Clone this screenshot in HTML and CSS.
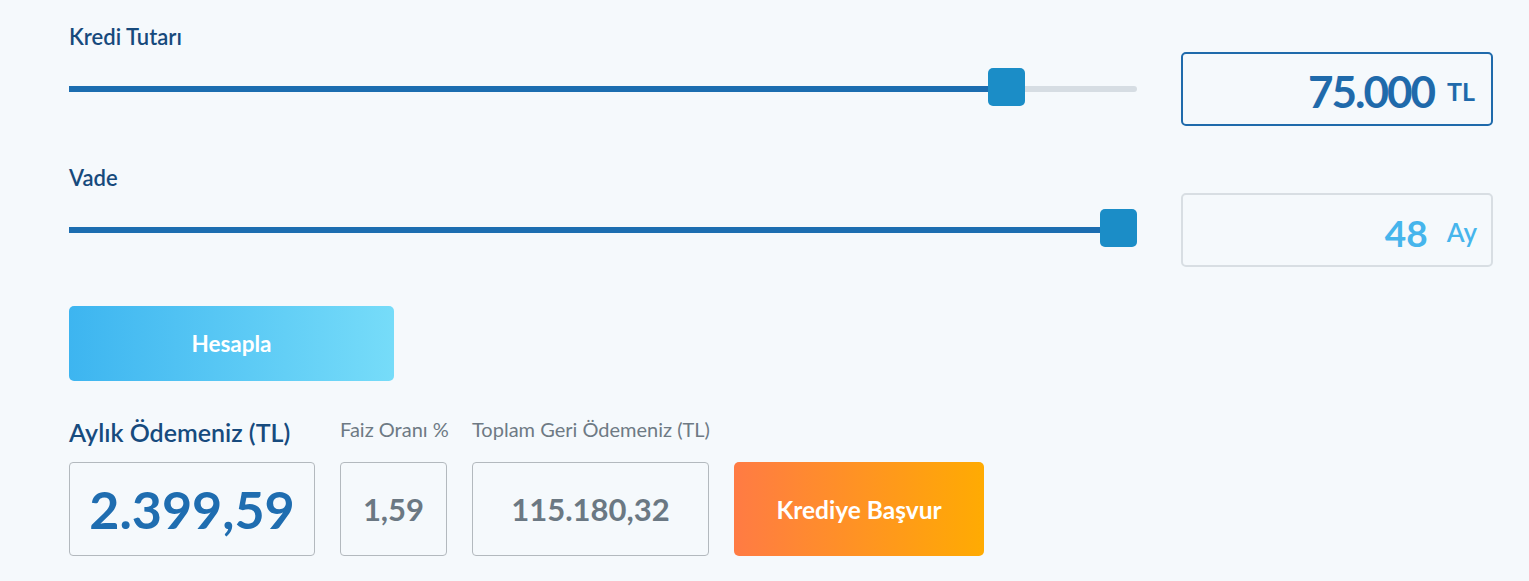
FILE: index.html
```html
<!DOCTYPE html>
<html lang="tr">
<head>
  <meta charset="UTF-8" />
  <meta name="viewport" content="width=device-width, initial-scale=1.0" />
  <title>Kredi Hesaplama</title>
  <link rel="stylesheet" href="styles.css">
</head>
<body>
  <div class="calculator">
    <div class="field">
      <label class="field-label">Kredi Tutarı</label>
      <div class="field-row">
        <div class="slider" style="--p: 0.891">
          <div class="slider-track"><div class="slider-fill"></div></div>
          <div class="slider-thumb"></div>
        </div>
        <div class="value-box active">
          <span class="value-number">75.000</span>
          <span class="value-unit">TL</span>
        </div>
      </div>
    </div>

    <div class="field">
      <label class="field-label">Vade</label>
      <div class="field-row">
        <div class="slider" style="--p: 1">
          <div class="slider-track"><div class="slider-fill"></div></div>
          <div class="slider-thumb"></div>
        </div>
        <div class="value-box">
          <span class="value-number">48</span>
          <span class="value-unit">Ay</span>
        </div>
      </div>
    </div>

    <button class="btn btn-calc">Hesapla</button>

    <div class="results">
      <div class="result monthly">
        <div class="result-label main">Aylık Ödemeniz (TL)</div>
        <div class="result-box">2.399,59</div>
      </div>
      <div class="result rate">
        <div class="result-label">Faiz Oranı %</div>
        <div class="result-box">1,59</div>
      </div>
      <div class="result total">
        <div class="result-label">Toplam Geri Ödemeniz (TL)</div>
        <div class="result-box">115.180,32</div>
      </div>
      <button class="btn btn-apply">Krediye Başvur</button>
    </div>
  </div>
</body>
</html>
```

FILE: styles.css
```css
body {
  margin: 0;
  background: #f5f9fc;
  font-family: Lato, "Noto Sans", sans-serif;
  color: #174a7c;
}
.calculator {
  padding: 24px 36px 0 69px;
}
.field {
  margin-bottom: 39px;
}
.field-label {
  display: block;
  font-size: 22px;
  line-height: 26px;
  font-weight: 600;
  color: #174a7c;
  margin-bottom: 2px;
}
.field-row {
  display: flex;
  align-items: center;
  gap: 44px;
}

/* slider */
.slider {
  position: relative;
  flex: 1;
  height: 38px;
  margin-bottom: 4px;
  display: flex;
  align-items: center;
}
.slider-track {
  width: 100%;
  height: 6px;
  margin-top: 4px;
  background: #d6dde3;
  border-radius: 0 3px 3px 0;
  overflow: hidden;
}
.slider-fill {
  height: 100%;
  width: calc((100% - 37px) * var(--p) + 18px);
  background: #1c6db0;
}
.slider-thumb {
  position: absolute;
  top: 0;
  left: calc((100% - 37px) * var(--p));
  width: 37px;
  height: 38px;
  border-radius: 5px;
  background: #1b8dc7;
}

/* value input */
.value-box {
  box-sizing: border-box;
  width: 312px;
  height: 74px;
  padding: 4px 14px 0 16px;
  border: 2px solid #d8dee3;
  border-radius: 5px;
  display: flex;
  align-items: center;
  justify-content: flex-end;
  color: #46b5ec;
}
.value-box.active {
  border-color: #1f6aab;
  color: #1f6aab;
  padding-right: 16px;
}
.value-number {
  font-size: 37px;
  line-height: 1;
  font-weight: 700;
}
.value-unit {
  font-size: 26px;
  line-height: 1;
  font-weight: 600;
  margin-left: 19px;
}
.active .value-number {
  font-size: 44px;
  letter-spacing: -2px;
}
.active .value-unit {
  font-size: 25px;
  font-weight: 700;
  margin-left: 13px;
}

/* buttons */
.btn {
  border: none;
  border-radius: 5px;
  color: #fff;
  font-family: inherit;
  font-weight: 700;
  cursor: pointer;
}
.btn-calc {
  display: block;
  width: 325px;
  height: 75px;
  font-size: 22.5px;
  background: linear-gradient(90deg, #3db5f0, #76dcf9);
}
.btn-apply {
  width: 250px;
  height: 94px;
  font-size: 24.5px;
  background: linear-gradient(90deg, #ff7b44, #ffab02);
}

/* results */
.results {
  display: flex;
  align-items: flex-end;
  gap: 25px;
  margin-top: 36px;
}
.result {
  display: flex;
  flex-direction: column;
  flex: none;
}
.result.monthly { width: 246px; }
.result.rate { width: 107px; }
.result.total { width: 237px; }
.result-label {
  font-size: 20px;
  line-height: 24px;
  color: #6e7a84;
  white-space: nowrap;
  margin-bottom: 21px;
}
.result-label.main {
  font-size: 25px;
  line-height: 28px;
  font-weight: 600;
  color: #174b7e;
  margin-bottom: 16px;
}
.result-box {
  box-sizing: border-box;
  height: 94px;
  border: 1px solid #b3b9be;
  border-radius: 4px;
  display: flex;
  align-items: center;
  justify-content: center;
  font-weight: 700;
  color: #6b7883;
  font-size: 31px;
}
.monthly .result-box {
  font-size: 52px;
  color: #1f6db0;
}
```
